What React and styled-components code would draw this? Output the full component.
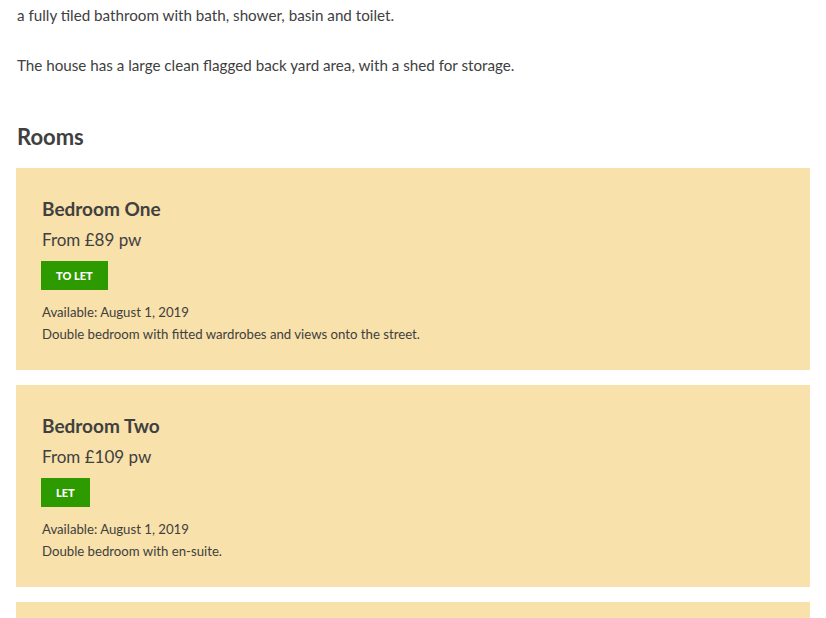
import styled, {createGlobalStyle} from "styled-components";

const rooms = [
  {
    name: "Bedroom One",
    price: "From £89 pw",
    status: "To let",
    available: "Available: August 1, 2019",
    text: "Double bedroom with fitted wardrobes and views onto the street.",
  },
  {
    name: "Bedroom Two",
    price: "From £109 pw",
    status: "Let",
    available: "Available: August 1, 2019",
    text: "Double bedroom with en-suite.",
  },
  {name: "", price: "", status: "", available: "", text: ""},
];

const GlobalStyle = createGlobalStyle`
  body {
    margin: 0;
    background: #fff;
    font-family: Lato, "Noto Sans", sans-serif;
    color: #404040;
  }
`;

export default function App() {
  return (
    <Page>
      <GlobalStyle />
      <Para>a fully tiled bathroom with bath, shower, basin and toilet.</Para>
      <Para>The house has a large clean flagged back yard area, with a shed for storage.</Para>
      <Heading>Rooms</Heading>
      <RoomList>
        {rooms.map((room, i) => (
          <Room key={i}>
            {room.name && (
              <>
                <RoomName>{room.name}</RoomName>
                <Price>{room.price}</Price>
                <Badge>{room.status}</Badge>
                <Small>{room.available}</Small>
                <Small>{room.text}</Small>
              </>
            )}
          </Room>
        ))}
      </RoomList>
    </Page>
  );
}

const Page = styled.div`
  padding: 4px 16px 0 16px;
  width: 794px;
  height: 618px;
  overflow: hidden;
`;

const Para = styled.p`
  margin: 0 0 28px 1px;
  font-size: 15.2px;
  line-height: 22px;
`;

const Heading = styled.h2`
  margin: 46px 0 16px 1px;
  font-size: 22px;
  font-weight: 700;
  line-height: 30px;
`;

const RoomList = styled.div`
  display: flex;
  flex-direction: column;
  gap: 15px;
`;

const Room = styled.div`
  background: #f8e1aa;
  height: 202px;
  padding: 29px 26px 0 26px;
  box-sizing: border-box;
`;

const RoomName = styled.h3`
  margin: 0;
  font-size: 19px;
  line-height: 24px;
  font-weight: 700;
`;

const Price = styled.div`
  margin-top: 7px;
  font-size: 17px;
  line-height: 24px;
`;

const Badge = styled.div`
  display: inline-block;
  margin: 9px 0 11px -1px;
  padding: 0 15px;
  height: 29px;
  line-height: 29px;
  background: #2d9b00;
  color: #fff;
  font-size: 11px;
  font-weight: 900;
  text-transform: uppercase;
`;

const Small = styled.div`
  font-size: 13.2px;
  line-height: 22px;
`;
